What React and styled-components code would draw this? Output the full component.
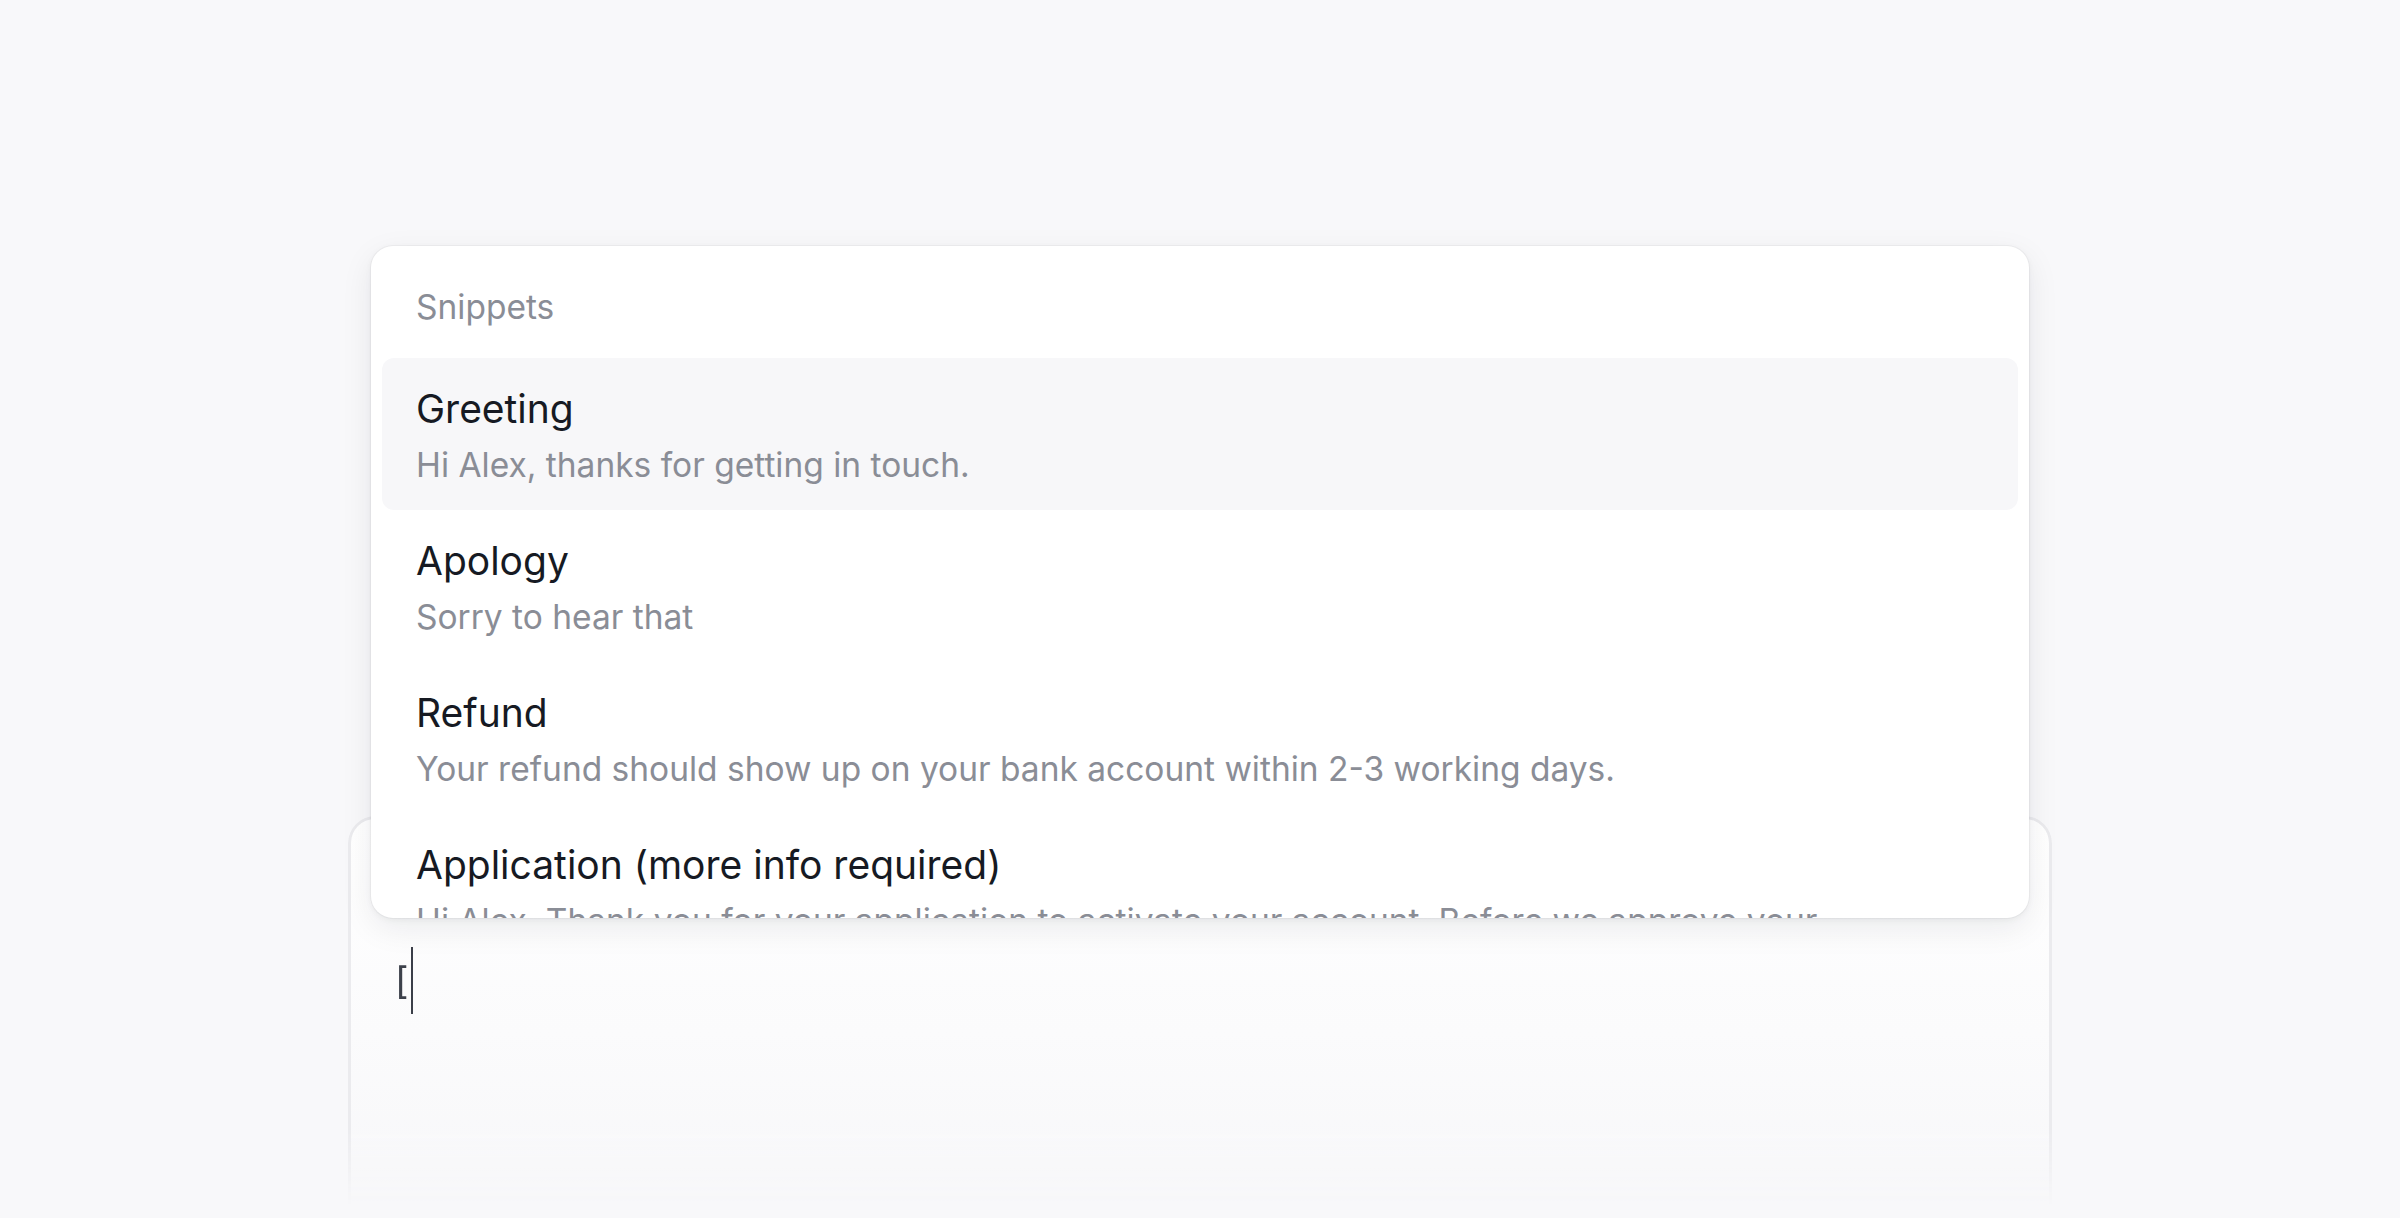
import React from "react";
import styled, { createGlobalStyle } from "styled-components";

const Global = createGlobalStyle`
  html, body { margin: 0; padding: 0; background: #f8f8fa; }
  body { font-family: Inter, "Noto Sans", "Liberation Sans", sans-serif; -webkit-font-smoothing: antialiased; }
  * { box-sizing: border-box; }
`;

const Page = styled.div`
  width: 2400px;
  height: 1218px;
  overflow: hidden;
  background: #f8f8fa;
  display: flex;
  justify-content: center;
  padding-top: 816px;
`;

const Composer = styled.div`
  position: relative;
  width: 1704px;
  height: 390px;
`;

const Editor = styled.div`
  height: 100%;
  border: 3px solid #ebebee;
  border-bottom: none;
  border-radius: 27px 27px 0 0;
  background: linear-gradient(180deg, #ffffff 0%, #fbfbfc 55%, #f7f7f9 100%);
  padding: 128px 44px 0;
  -webkit-mask-image: linear-gradient(180deg, #000 0%, #000 80%, transparent 100%);
  mask-image: linear-gradient(180deg, #000 0%, #000 80%, transparent 100%);
`;

const Line = styled.div`
  display: flex;
  align-items: center;
  height: 67px;
  font-size: 37px;
  color: #3d414b;
`;

const Caret = styled.span`
  display: inline-block;
  width: 2px;
  height: 67px;
  margin-left: 2px;
  background: #3b3f49;
`;

const Popup = styled.div`
  position: absolute;
  top: -570px;
  left: 23px;
  right: 23px;
  height: 672px;
  background: #ffffff;
  border-radius: 22px;
  padding: 11px 11px 0;
  overflow: hidden;
  box-shadow: 0 0 0 1px rgba(17, 24, 39, 0.035), 0 2px 6px rgba(17, 24, 39, 0.05),
    0 10px 32px rgba(17, 24, 39, 0.08);
`;

const Header = styled.div`
  padding: 24px 34px 25px;
  font-size: 33.5px;
  line-height: 52px;
  color: #8a8d96;
`;

const Item = styled.div`
  padding: 24px 34px 19px;
  border-radius: 12px;
  background: ${(p) => (p.$active ? "#f7f7f9" : "transparent")};
`;

const Title = styled.div`
  font-size: 39px;
  line-height: 54px;
  color: #161a23;
`;

const Desc = styled.div`
  margin-top: 3px;
  font-size: 33.5px;
  line-height: 52px;
  color: #8a8d96;
  white-space: nowrap;
`;

const snippets = [
  { title: "Greeting", desc: "Hi Alex, thanks for getting in touch." },
  { title: "Apology", desc: "Sorry to hear that" },
  {
    title: "Refund",
    desc: "Your refund should show up on your bank account within 2-3 working days.",
  },
  {
    title: "Application (more info required)",
    desc: "Hi Alex, Thank you for your application to activate your account. Before we approve your",
  },
];

export default function App() {
  return (
    <>
      <Global />
      <Page>
        <Composer>
          <Editor>
            <Line>
              <span>[</span>
              <Caret />
            </Line>
          </Editor>
          <Popup>
            <Header>Snippets</Header>
            {snippets.map((s, i) => (
              <Item key={s.title} $active={i === 0}>
                <Title>{s.title}</Title>
                <Desc>{s.desc}</Desc>
              </Item>
            ))}
          </Popup>
        </Composer>
      </Page>
    </>
  );
}
